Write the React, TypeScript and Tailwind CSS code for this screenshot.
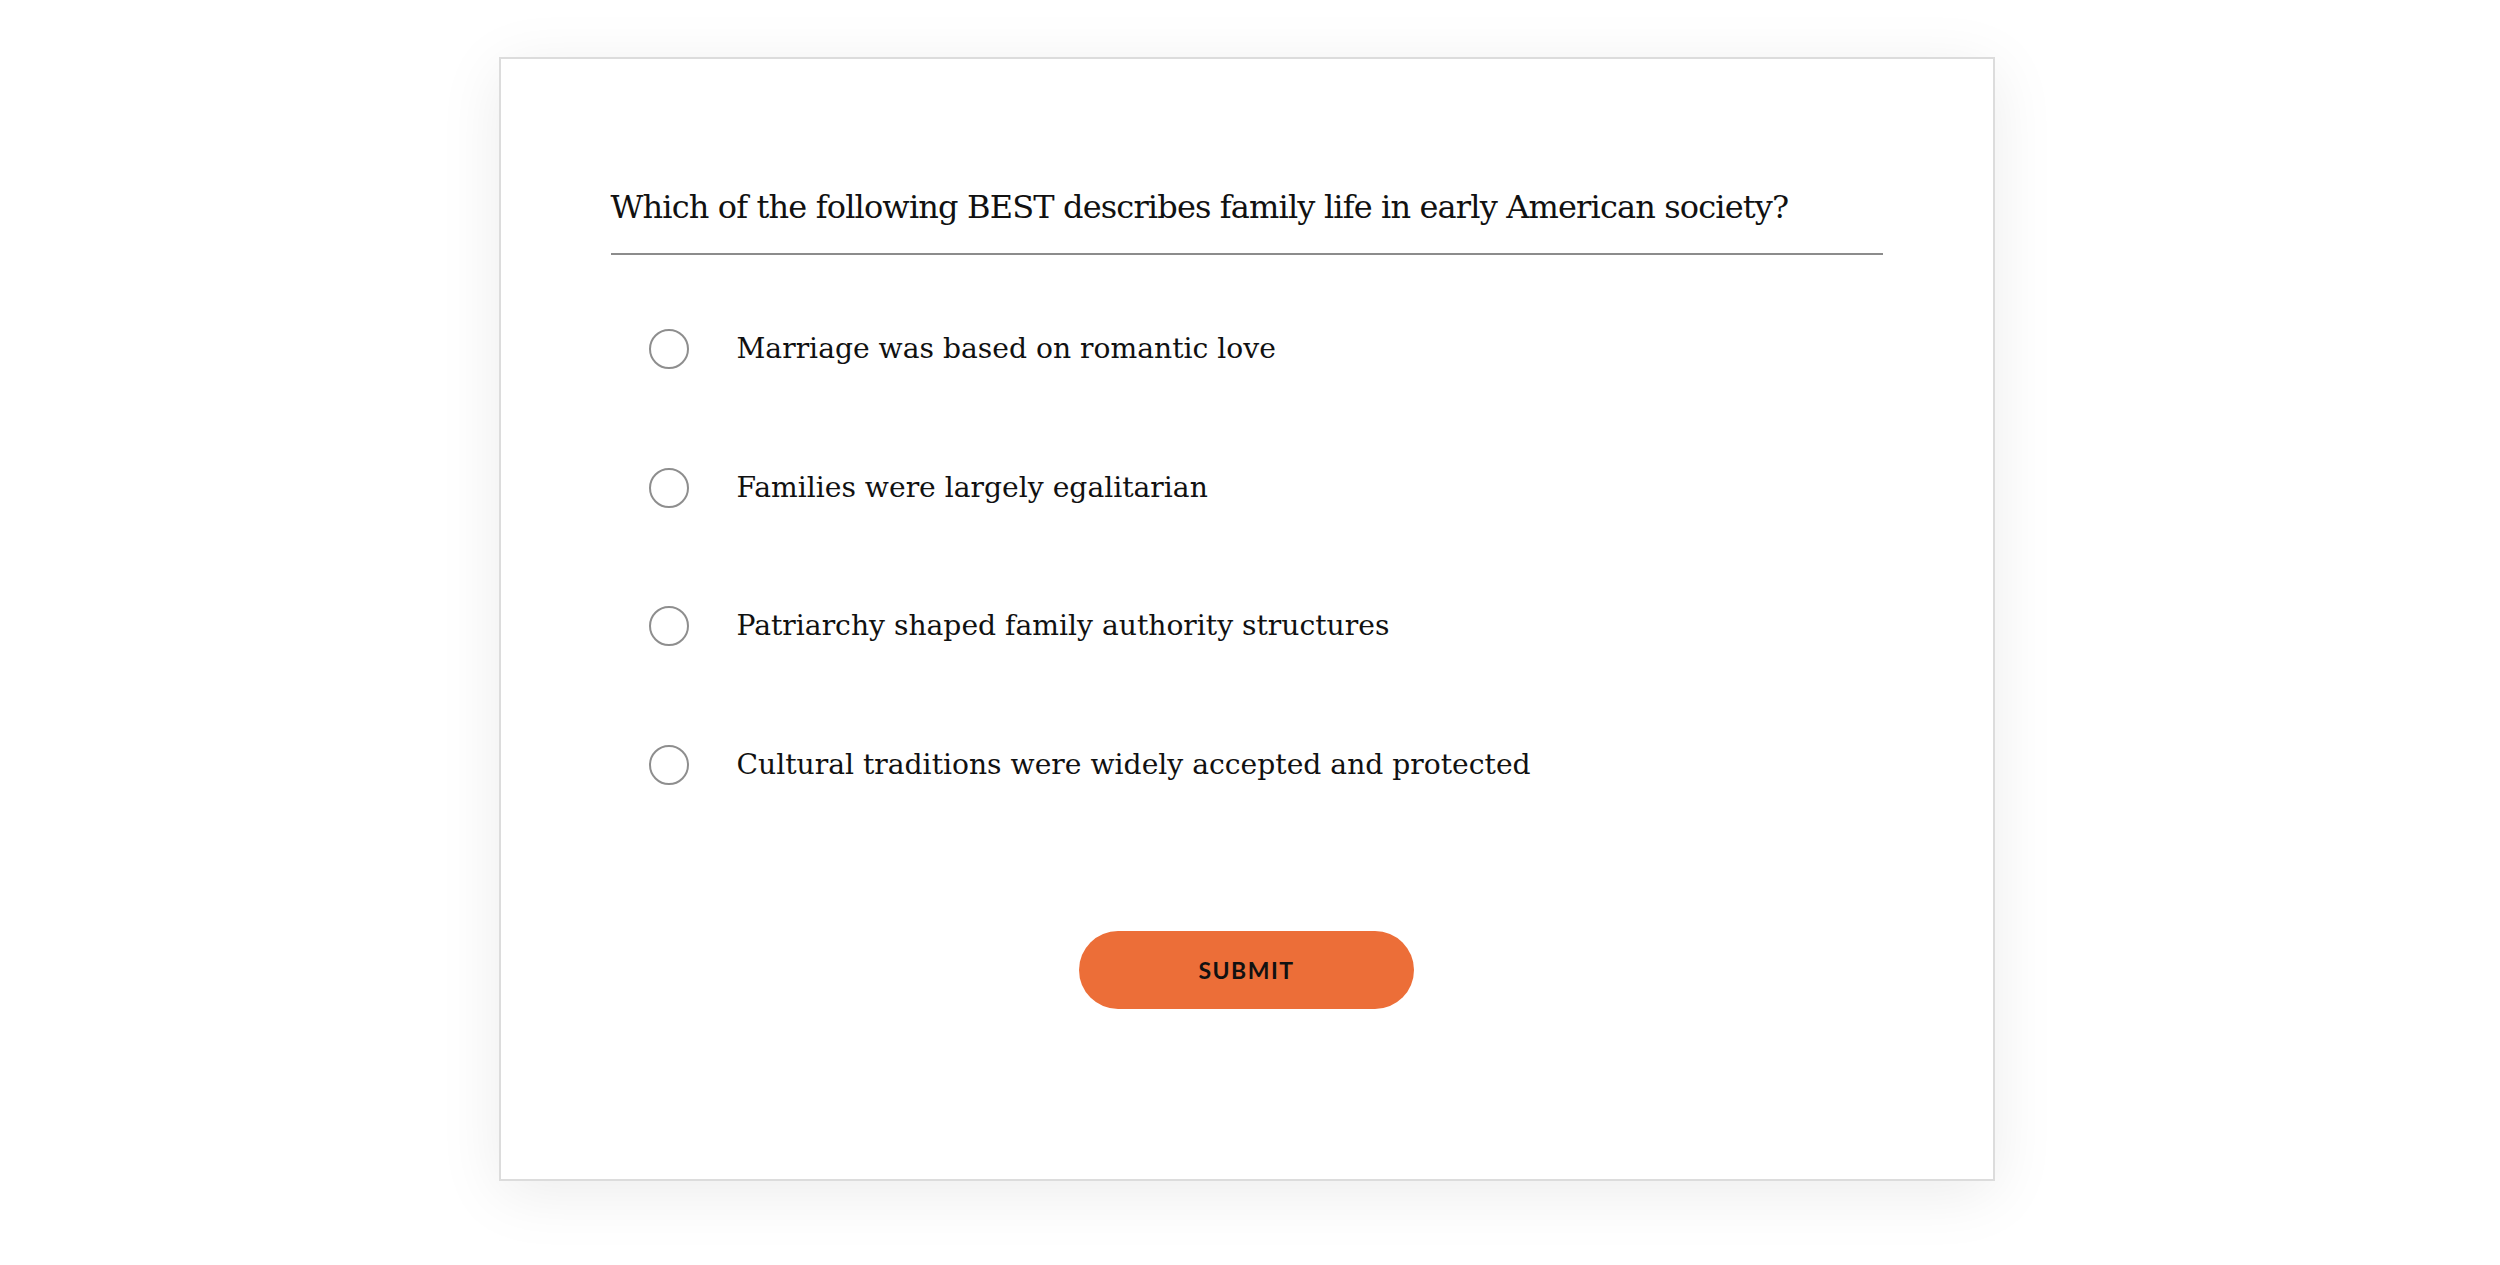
const question = 'Which of the following BEST describes family life in early American society?';

const options = [
  'Marriage was based on romantic love',
  'Families were largely egalitarian',
  'Patriarchy shaped family authority structures',
  'Cultural traditions were widely accepted and protected',
];

export default function App() {
  return (
    <div className="min-h-[1265px] bg-white pr-[7px] pt-[57px]">
      {/* Quiz card */}
      <div className="mx-auto h-[1124px] w-[1496px] border-2 border-[#dcdcdc] bg-white shadow-[0_12px_60px_rgba(0,0,0,0.08)]">
        <div className="px-[110px] pt-[126px]">
          {/* Question */}
          <h2 className="border-b-2 border-[#8c8c8c] pb-[24px] font-['DejaVu_Serif',serif] text-[32px] leading-[44px] tracking-[-0.85px] text-[#111]">
            {question}
          </h2>

          {/* Options */}
          <div className="mt-[25px]">
            {options.map((option) => (
              <label
                key={option}
                className="flex h-[138.5px] cursor-pointer items-center gap-[48px] pl-[38px]"
              >
                <span className="size-[40px] shrink-0 rounded-full border-2 border-[#8e8e8e] bg-white" />
                <span className="font-['DejaVu_Serif',serif] text-[28.2px] leading-[40px] text-[#111]">
                  {option}
                </span>
              </label>
            ))}
          </div>

          {/* Submit */}
          <div className="mt-[97px] flex justify-center">
            <button className="flex h-[78px] w-[335px] items-center justify-center rounded-full bg-[#ec6e38] font-['Lato',sans-serif] text-[23px] font-bold tracking-[1.5px] text-[#111]">
              SUBMIT
            </button>
          </div>
        </div>
      </div>
    </div>
  );
}
